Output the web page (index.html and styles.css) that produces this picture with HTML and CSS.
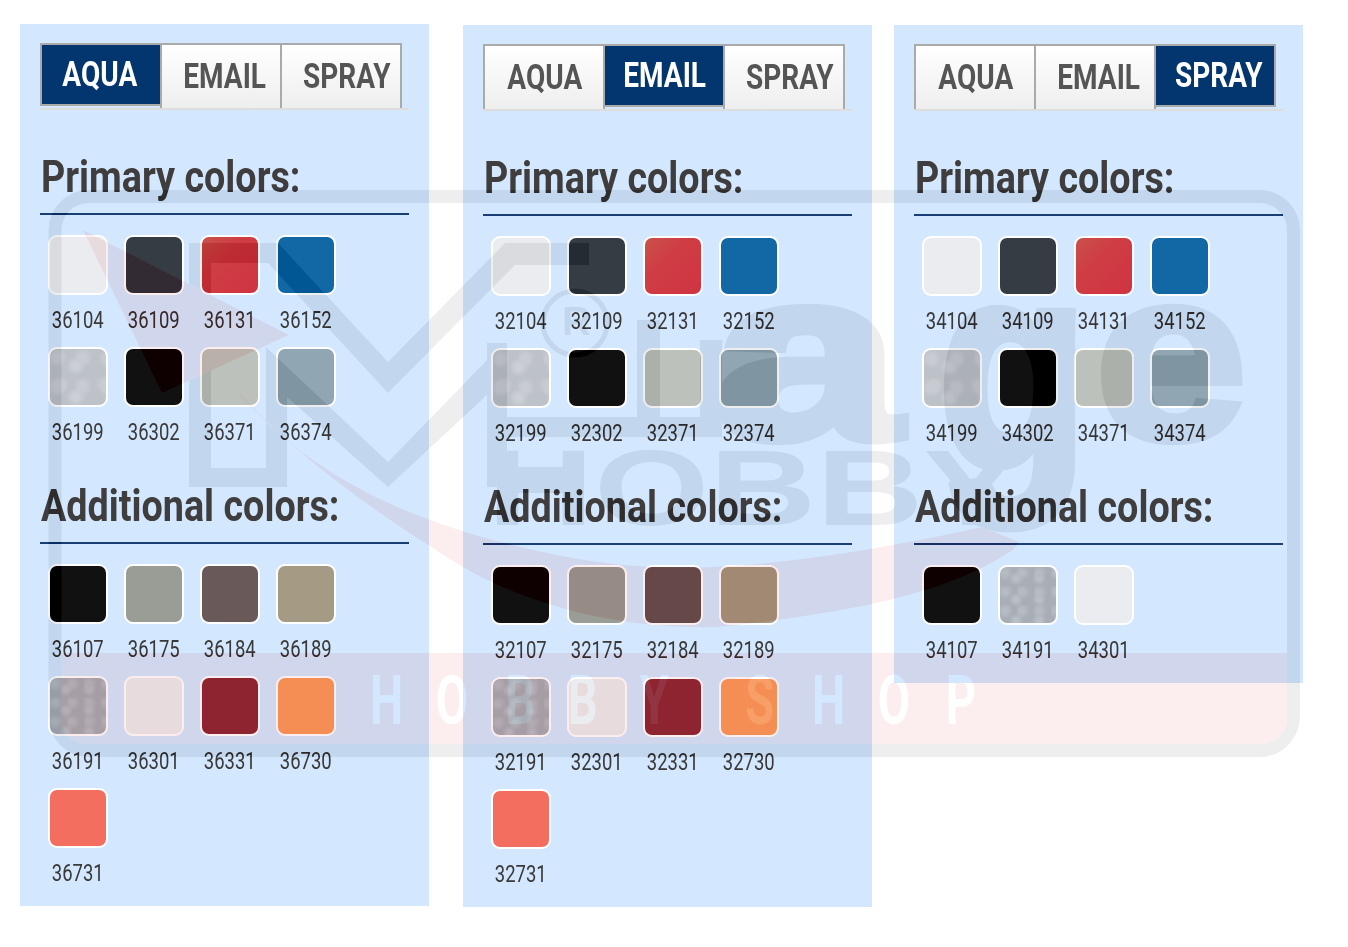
FILE: index.html
```html
<!DOCTYPE html>
<html lang="en">
<head>
<meta charset="utf-8">
<title>Colors</title>
<link rel="stylesheet" href="styles.css">
</head>
<body>
<main class="page">
  <section class="panel panel-a">
    <div class="tabs">
      <a class="tab active"><span>AQUA</span></a><a class="tab"><span>EMAIL</span></a><a class="tab"><span>SPRAY</span></a>
    </div>
    <h2 class="title"><span>Primary colors:</span></h2>
    <div class="grid">
      <div class="cell"><span class="sw white"></span><span class="code">36104</span></div>
      <div class="cell"><span class="sw dark"></span><span class="code">36109</span></div>
      <div class="cell"><span class="sw red"></span><span class="code">36131</span></div>
      <div class="cell"><span class="sw blue"></span><span class="code">36152</span></div>
      <div class="cell"><span class="sw silver"></span><span class="code">36199</span></div>
      <div class="cell"><span class="sw black"></span><span class="code">36302</span></div>
      <div class="cell"><span class="sw sand"></span><span class="code">36371</span></div>
      <div class="cell"><span class="sw steel"></span><span class="code">36374</span></div>
    </div>
    <h2 class="title next"><span>Additional colors:</span></h2>
    <div class="grid">
      <div class="cell"><span class="sw black"></span><span class="code">36107</span></div>
      <div class="cell"><span class="sw olive"></span><span class="code">36175</span></div>
      <div class="cell"><span class="sw brown"></span><span class="code">36184</span></div>
      <div class="cell"><span class="sw khaki"></span><span class="code">36189</span></div>
      <div class="cell"><span class="sw gun"></span><span class="code">36191</span></div>
      <div class="cell"><span class="sw white"></span><span class="code">36301</span></div>
      <div class="cell"><span class="sw wine"></span><span class="code">36331</span></div>
      <div class="cell"><span class="sw orange"></span><span class="code">36730</span></div>
      <div class="cell"><span class="sw coral"></span><span class="code">36731</span></div>
    </div>
  </section>

  <section class="panel panel-b">
    <div class="tabs">
      <a class="tab"><span>AQUA</span></a><a class="tab active"><span>EMAIL</span></a><a class="tab"><span>SPRAY</span></a>
    </div>
    <h2 class="title"><span>Primary colors:</span></h2>
    <div class="grid">
      <div class="cell"><span class="sw white"></span><span class="code">32104</span></div>
      <div class="cell"><span class="sw dark"></span><span class="code">32109</span></div>
      <div class="cell"><span class="sw red"></span><span class="code">32131</span></div>
      <div class="cell"><span class="sw blue"></span><span class="code">32152</span></div>
      <div class="cell"><span class="sw silver"></span><span class="code">32199</span></div>
      <div class="cell"><span class="sw black"></span><span class="code">32302</span></div>
      <div class="cell"><span class="sw sand"></span><span class="code">32371</span></div>
      <div class="cell"><span class="sw steel"></span><span class="code">32374</span></div>
    </div>
    <h2 class="title next"><span>Additional colors:</span></h2>
    <div class="grid">
      <div class="cell"><span class="sw black"></span><span class="code">32107</span></div>
      <div class="cell"><span class="sw olive"></span><span class="code">32175</span></div>
      <div class="cell"><span class="sw brown"></span><span class="code">32184</span></div>
      <div class="cell"><span class="sw khaki"></span><span class="code">32189</span></div>
      <div class="cell"><span class="sw gun"></span><span class="code">32191</span></div>
      <div class="cell"><span class="sw white"></span><span class="code">32301</span></div>
      <div class="cell"><span class="sw wine"></span><span class="code">32331</span></div>
      <div class="cell"><span class="sw orange"></span><span class="code">32730</span></div>
      <div class="cell"><span class="sw coral"></span><span class="code">32731</span></div>
    </div>
  </section>

  <section class="panel panel-c">
    <div class="tabs">
      <a class="tab"><span>AQUA</span></a><a class="tab"><span>EMAIL</span></a><a class="tab active"><span>SPRAY</span></a>
    </div>
    <h2 class="title"><span>Primary colors:</span></h2>
    <div class="grid">
      <div class="cell"><span class="sw white"></span><span class="code">34104</span></div>
      <div class="cell"><span class="sw dark"></span><span class="code">34109</span></div>
      <div class="cell"><span class="sw red"></span><span class="code">34131</span></div>
      <div class="cell"><span class="sw blue"></span><span class="code">34152</span></div>
      <div class="cell"><span class="sw silver"></span><span class="code">34199</span></div>
      <div class="cell"><span class="sw black"></span><span class="code">34302</span></div>
      <div class="cell"><span class="sw sand"></span><span class="code">34371</span></div>
      <div class="cell"><span class="sw steel"></span><span class="code">34374</span></div>
    </div>
    <h2 class="title next"><span>Additional colors:</span></h2>
    <div class="grid">
      <div class="cell"><span class="sw black"></span><span class="code">34107</span></div>
      <div class="cell"><span class="sw gun"></span><span class="code">34191</span></div>
      <div class="cell"><span class="sw white"></span><span class="code">34301</span></div>
    </div>
  </section>
</main>

<svg class="mark" viewBox="0 0 1348 947" aria-hidden="true">
  <rect class="m-frame" x="55" y="196.5" width="1238.5" height="554" rx="34"/>
  <path class="m-grey" d="M189 243H278L388 362L505 243H589V265H515L388 393L268 263H211V468H266V347L388 462L487 360V343H507V487H487V395L388 487L287 397V487H189Z"/>
  <rect class="m-grey" x="487" y="467" width="90" height="20"/>
  <rect class="m-grey" x="487" y="417" width="150" height="20"/>
  <path class="m-grey" d="M637 320H660V417H700V340H722V437H637Z"/>
  <circle class="m-ring" cx="575" cy="323" r="32"/>
  <text class="m-r" x="562" y="335">R</text>
  <text class="m-hobby" x="487" y="525" textLength="535" lengthAdjust="spacingAndGlyphs">HOBBY</text>
  <text class="m-big" x="714" y="438" textLength="186" lengthAdjust="spacingAndGlyphs">a</text>
  <text class="m-big m-g" x="938" y="466" textLength="150" lengthAdjust="spacingAndGlyphs">g</text>
  <text class="m-big" x="1096" y="438" textLength="150" lengthAdjust="spacingAndGlyphs">e</text>
  <path class="m-band" d="M61 653H1287V718a26 26 0 0 1-26 26H87a26 26 0 0 1-26-26Z"/>
  <g transform="scale(.68 1)"><text class="m-shop" x="544 641 743 835 941 1096 1194 1291 1391" y="724">HOBBYSHOP</text></g>
  <path class="m-band" d="M83 230L289 335L162 393Z"/>
  <path class="m-band" d="M230 382C300 470 400 520 534 550C600 566 660 569 712 567C800 563 900 545 982 527L1019 542L1013 550C960 585 884 610 717 627C600 630 500 595 436 550C340 490 270 430 230 382Z"/>
</svg>
</body>
</html>
```
FILE: styles.css
```css
* { box-sizing: border-box; }
html, body { margin: 0; background: #fff; }
body { position: relative; font-family: Roboto, "Liberation Sans", sans-serif; color: #3f3d3d; }
.page { display: flex; align-items: flex-start; }
.panel { width: 409px; padding: 19px 20px 6px; background: #d3e8fe; }
.panel-a { margin: 24px 0 0 20px; }
.panel-b { margin: 25px 0 0 34px; }
.panel-c { margin: 25px 0 0 22px; }

.tabs { display: flex; height: 67px; border-bottom: 2px solid #ddd; align-items: flex-start; }
.tab { display: flex; justify-content: center; flex: 0 0 121.6px; min-width: 0; height: 65px; margin-right: -1.6px; padding-top: 14px; border: 2px solid #aaa; border-bottom: 0; background: linear-gradient(#fff, #eee); color: #555; font-size: 35px; line-height: 35px; font-weight: 700; white-space: nowrap; }
.tab span { display: block; flex: none; transform: scaleX(.8); }
.tab:nth-child(1) span { transform: translateX(1px) scaleX(.8); }
.tab:nth-child(2) span { transform: translateX(4px) scaleX(.8); }
.tab:nth-child(3) span { transform: translateX(6px) scaleX(.8); }
.tab.active { height: 63px; padding-top: 12px; border-bottom: 2px solid #aaa; background: #03356e; color: #fff; position: relative; }
.tab.active:nth-child(1) span { transform: translateX(-1px) scaleX(.8); }
.tab.active:nth-child(2) span { transform: translateX(1px) scaleX(.8); }
.tab.active:nth-child(3) span { transform: translateX(4px) scaleX(.8); }

.title { margin: 40px 0 0; height: 65px; padding: 0 0 9px 1px; border-bottom: 2px solid #1a3f74; font-size: 45px; line-height: 54px; font-weight: 700; color: #3f3d3d; white-space: nowrap; }
.title span { display: inline-block; transform: scaleX(.838); transform-origin: left center; }
.title.next { margin-top: 20px; }

.grid { display: grid; grid-template-columns: repeat(4, 76px); grid-auto-rows: 112px; margin-top: 20px; }
.cell { display: flex; flex-direction: column; align-items: center; }
.sw { display: block; width: 60px; height: 60px; border: 2px solid #fff; border-radius: 9px; }
.code { margin-top: 11px; font-size: 24px; line-height: 28px; color: #3a3838; transform: scaleX(.77); }

.white { background: #ebecef; }
.dark { background: #363c44; }
.red { background: linear-gradient(135deg, #c9524a, #cf3e44 35%, #d03342); }
.blue { background: #1168a4; }
.silver { background:
  radial-gradient(circle at 30% 30%, #c8ccd2 0 4px, transparent 10px),
  radial-gradient(circle at 70% 55%, #ccd0d6 0 3px, transparent 10px),
  radial-gradient(circle at 25% 75%, #c6cacf 0 4px, transparent 9px),
  #bdc1c8; background-size: 25px 29px, 37px 31px, 43px 47px, auto; }
.black { background: #111; }
.sand { background: #bdc1bb; }
.steel { background: #90a6b3; }
.olive { background: #9a9c96; }
.brown { background: #6a5959; }
.khaki { background: #a59a84; }
.gun { background:
  radial-gradient(circle at 30% 30%, #b6bcc4 0 2px, transparent 8px),
  radial-gradient(circle at 70% 55%, #b9bfc7 0 2px, transparent 7px),
  #a9aeb6; background-size: 17px 19px, 23px 21px, auto; }
.wine { background: #923542; }
.orange { background: #f79f66; }
.coral { background: #f46e5f; }

.mark { position: absolute; left: 0; top: 0; width: 1348px; height: 947px; mix-blend-mode: difference; pointer-events: none; }
.m-frame { fill: none; stroke: #111; stroke-width: 13px; }
.m-grey { fill: #111; }
.m-ring { fill: none; stroke: #111; stroke-width: 5px; }
.m-r { fill: #111; font: 700 40px "Liberation Sans", sans-serif; }
.m-hobby { fill: #111; font: 700 108px "Liberation Sans", sans-serif; }
.m-big { fill: #111; stroke: #111; stroke-width: 10px; font: 700 240px "Liberation Sans", sans-serif; }
.m-g { font-size: 290px; }
.m-band { fill: #031111; }
.m-shop { fill: #000; font: 700 69px Roboto, sans-serif; }
```
